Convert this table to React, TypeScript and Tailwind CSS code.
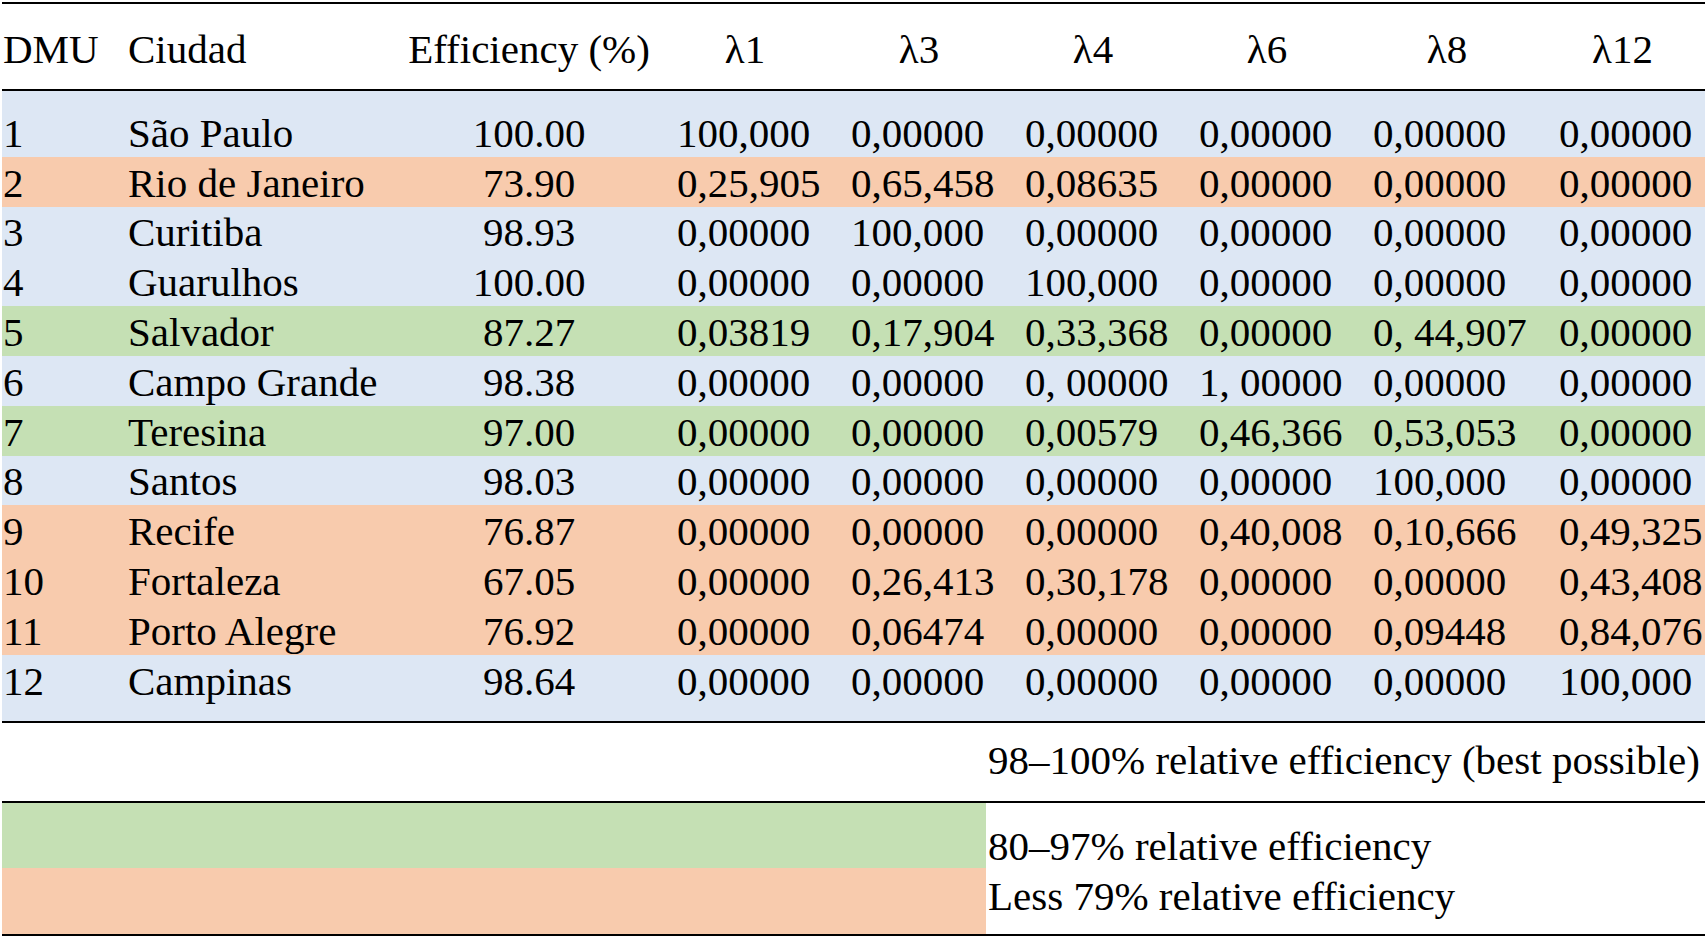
type Tone = 'blue' | 'orange' | 'green';

type Row = {
  dmu: string;
  city: string;
  eff: string;
  lambdas: string[];
  tone: Tone;
};

const rows: Row[] = [
  { dmu: '1', city: 'São Paulo', eff: '100.00', lambdas: ['100,000', '0,00000', '0,00000', '0,00000', '0,00000', '0,00000'], tone: 'blue' },
  { dmu: '2', city: 'Rio de Janeiro', eff: '73.90', lambdas: ['0,25,905', '0,65,458', '0,08635', '0,00000', '0,00000', '0,00000'], tone: 'orange' },
  { dmu: '3', city: 'Curitiba', eff: '98.93', lambdas: ['0,00000', '100,000', '0,00000', '0,00000', '0,00000', '0,00000'], tone: 'blue' },
  { dmu: '4', city: 'Guarulhos', eff: '100.00', lambdas: ['0,00000', '0,00000', '100,000', '0,00000', '0,00000', '0,00000'], tone: 'blue' },
  { dmu: '5', city: 'Salvador', eff: '87.27', lambdas: ['0,03819', '0,17,904', '0,33,368', '0,00000', '0, 44,907', '0,00000'], tone: 'green' },
  { dmu: '6', city: 'Campo Grande', eff: '98.38', lambdas: ['0,00000', '0,00000', '0, 00000', '1, 00000', '0,00000', '0,00000'], tone: 'blue' },
  { dmu: '7', city: 'Teresina', eff: '97.00', lambdas: ['0,00000', '0,00000', '0,00579', '0,46,366', '0,53,053', '0,00000'], tone: 'green' },
  { dmu: '8', city: 'Santos', eff: '98.03', lambdas: ['0,00000', '0,00000', '0,00000', '0,00000', '100,000', '0,00000'], tone: 'blue' },
  { dmu: '9', city: 'Recife', eff: '76.87', lambdas: ['0,00000', '0,00000', '0,00000', '0,40,008', '0,10,666', '0,49,325'], tone: 'orange' },
  { dmu: '10', city: 'Fortaleza', eff: '67.05', lambdas: ['0,00000', '0,26,413', '0,30,178', '0,00000', '0,00000', '0,43,408'], tone: 'orange' },
  { dmu: '11', city: 'Porto Alegre', eff: '76.92', lambdas: ['0,00000', '0,06474', '0,00000', '0,00000', '0,09448', '0,84,076'], tone: 'orange' },
  { dmu: '12', city: 'Campinas', eff: '98.64', lambdas: ['0,00000', '0,00000', '0,00000', '0,00000', '0,00000', '100,000'], tone: 'blue' },
];

const toneBg: Record<Tone, string> = {
  blue: 'bg-[#dde7f4]',
  orange: 'bg-[#f8cbad]',
  green: 'bg-[#c5e0b4]',
};

const cols = 'grid grid-cols-[116px_282px_258px_174px_174px_174px_174px_186px_1fr]';
const lambdaHeads = ['λ1', 'λ3', 'λ4', 'λ6', 'λ8', 'λ12'];

export default function App() {
  return (
    <div
      className="w-[1705px] h-[938px] bg-white text-black text-[41px] leading-none overflow-hidden"
      style={{ fontFamily: '"Liberation Serif", "Times New Roman", serif' }}
    >
      <div className="ml-[2px] pt-[2px]">
        {/* header */}
        <div className={`${cols} h-[89px] items-center border-t-2 border-b-2 border-black pt-[5px]`}>
          <div className="pl-[1px]">DMU</div>
          <div className="pl-[10px]">Ciudad</div>
          <div className="text-center whitespace-nowrap">Efficiency (%)</div>
          {lambdaHeads.map(h => (
            <div key={h} className="text-center">{h}</div>
          ))}
        </div>

        {/* body */}
        <div className="bg-[#dde7f4] pt-[16px] pb-[16px] border-b-2 border-black">
          {rows.map(r => (
            <div key={r.dmu} className={`${cols} h-[49.8px] items-center pt-[3px] ${toneBg[r.tone]}`}>
              <div className="pl-[1px]">{r.dmu}</div>
              <div className="pl-[10px] whitespace-nowrap">{r.city}</div>
              <div className="text-center">{r.eff}</div>
              {r.lambdas.map((v, i) => (
                <div key={i} className="pl-[19px] whitespace-pre">{v}</div>
              ))}
            </div>
          ))}
        </div>

        {/* legend */}
        <div className="grid grid-cols-[984px_1fr] h-[80px] items-center border-b-2 border-black">
          <div />
          <div className="pl-[2px] pb-[2px] whitespace-nowrap">98–100% relative efficiency (best possible)</div>
        </div>
        <div className="grid grid-cols-[984px_1fr] border-b-2 border-black">
          <div className="flex flex-col">
            <div className="h-[65px] bg-[#c5e0b4]" />
            <div className="h-[66px] bg-[#f8cbad]" />
          </div>
          <div className="flex flex-col justify-center pl-[2px] pt-[6px] leading-[50px] whitespace-nowrap">
            <div>80–97% relative efficiency</div>
            <div>Less 79% relative efficiency</div>
          </div>
        </div>
      </div>
    </div>
  );
}
